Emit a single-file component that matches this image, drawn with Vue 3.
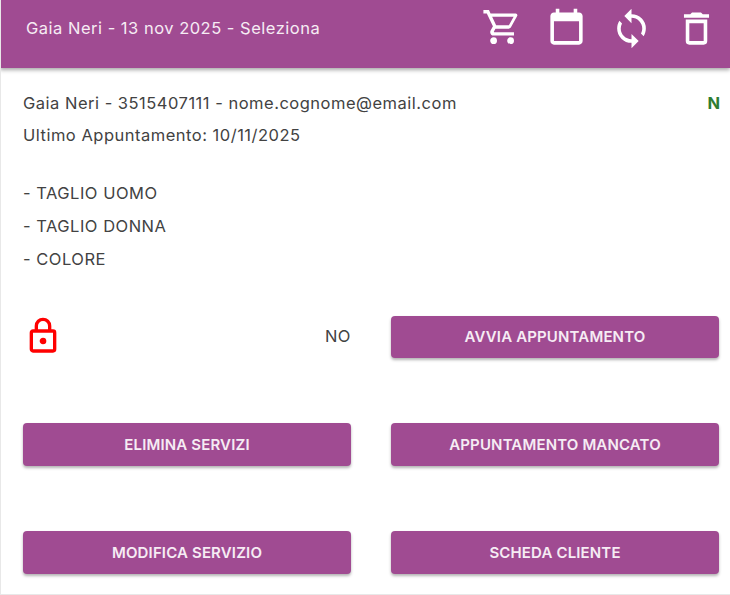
<template>
  <div class="page">
    <header class="toolbar">
      <span class="title">{{ title }}</span>
      <div class="actions">
        <svg v-for="icon in toolbarIcons" :key="icon.name" class="tool-icon" :viewBox="icon.box">
          <path :d="icon.path" />
        </svg>
      </div>
    </header>

    <main class="content">
      <div class="client-line">
        <span>Gaia Neri - 3515407111 - nome.cognome@email.com</span>
        <strong class="status">N</strong>
      </div>
      <div class="line">Ultimo Appuntamento: 10/11/2025</div>

      <ul class="services">
        <li v-for="service in services" :key="service">- {{ service }}</li>
      </ul>

      <div class="grid">
        <div class="lock-row">
          <svg class="lock" viewBox="0 0 24 24">
            <path d="M12,17C10.89,17 10,16.1 10,15C10,13.89 10.89,13 12,13A2,2 0 0,1 14,15A2,2 0 0,1 12,17M18,20V10H6V20H18M18,8A2,2 0 0,1 20,10V20A2,2 0 0,1 18,22H6C4.89,22 4,21.1 4,20V10C4,8.89 4.89,8 6,8H7V6A5,5 0 0,1 12,1A5,5 0 0,1 17,6V8H18M12,3A3,3 0 0,0 9,6V8H15V6A3,3 0 0,0 12,3Z" />
          </svg>
          <span class="lock-label">NO</span>
        </div>
        <button v-for="label in buttons" :key="label" class="btn">{{ label }}</button>
      </div>
    </main>
  </div>
</template>

<script setup>
const title = "Gaia Neri - 13 nov 2025 - Seleziona";
const services = ["TAGLIO UOMO", "TAGLIO DONNA", "COLORE"];
const buttons = ["AVVIA APPUNTAMENTO", "ELIMINA SERVIZI", "APPUNTAMENTO MANCATO", "MODIFICA SERVIZIO", "SCHEDA CLIENTE"];

const toolbarIcons = [
  {
    name: "cart",
    box: "-1 0.2 25.3 25.3",
    path: "M17,18A2,2 0 0,1 19,20A2,2 0 0,1 17,22C15.89,22 15,21.1 15,20C15,18.89 15.89,18 17,18M1,2H4.27L5.21,4H20A1,1 0 0,1 21,5C21,5.17 20.95,5.34 20.88,5.5L17.3,11.97C16.96,12.58 16.3,13 15.55,13H8.1L7.2,14.63L7.17,14.75A0.25,0.25 0 0,0 7.42,15H19V17H7C5.89,17 5,16.1 5,15C5,14.65 5.09,14.32 5.24,14.04L6.6,11.59L3,4H1V2M7,18A2,2 0 0,1 9,20A2,2 0 0,1 7,22C5.89,22 5,21.1 5,20C5,18.89 5.89,18 7,18M16,11L18.78,6H6.14L8.5,11H16Z",
  },
  {
    name: "calendar",
    box: "0 0 24 24",
    path: "M19 3H18V1H16V3H8V1H6V3H5C3.89 3 3 3.9 3 5V19C3 20.1 3.89 21 5 21H19C20.1 21 21 20.1 21 19V5C21 3.9 20.1 3 19 3M19 19H5V8H19V19Z",
  },
  {
    name: "sync",
    box: "0 0 24 24",
    path: "M12,18A6,6 0 0,1 6,12C6,11 6.25,10.03 6.7,9.2L5.24,7.74C4.46,8.97 4,10.43 4,12A8,8 0 0,0 12,20V23L16,19L12,15M12,4V1L8,5L12,9V6A6,6 0 0,1 18,12C18,13 17.75,13.97 17.3,14.8L18.76,16.26C19.54,15.03 20,13.57 20,12A8,8 0 0,0 12,4Z",
  },
  {
    name: "delete",
    box: "0 0 24 24",
    path: "M6,19A2,2 0 0,0 8,21H16A2,2 0 0,0 18,19V7H6V19M8,9H16V19H8V9M15.5,4L14.5,3H9.5L8.5,4H5V6H19V4H15.5Z",
  },
];
</script>

<style>
html,
body {
  margin: 0;
  background: #fff;
}
</style>

<style scoped>
.page {
  width: 730px;
  height: 595px;
  box-sizing: border-box;
  border-left: 1px solid #e8e8e8;
  border-bottom: 1px solid #e8e8e8;
  font-family: Inter, "Open Sans", sans-serif;
  font-size: 16.5px;
  letter-spacing: 0.5px;
  color: #424242;
  overflow: hidden;
}

.toolbar {
  display: flex;
  align-items: center;
  justify-content: space-between;
  height: 68px;
  margin-left: -1px;
  padding: 0 12px 0 26px;
  background: #a04b92;
  color: #f6ecf4;
  box-shadow: 0 2px 4px rgba(0, 0, 0, 0.35);
}

.title {
  margin-bottom: 12px;
}

.actions {
  display: flex;
  gap: 22px;
  margin-bottom: 12px;
}

.tool-icon {
  width: 43px;
  height: 43px;
  fill: #fff;
}

.content {
  padding: 19px 10px 0 22px;
}

.client-line {
  display: flex;
  justify-content: space-between;
  line-height: 32px;
}

.status {
  color: #2e7d32;
  letter-spacing: 0;
}

.line {
  line-height: 32px;
}

.services {
  list-style: none;
  margin: 26px 0 0;
  padding: 0;
}

.services li {
  line-height: 33px;
}

.grid {
  display: grid;
  grid-template-columns: 328px 328px;
  column-gap: 40px;
  row-gap: 65.2px;
  margin-top: 39.7px;
}

.lock-row {
  display: flex;
  align-items: center;
  justify-content: space-between;
  height: 42.5px;
}

.lock {
  align-self: flex-start;
  width: 40px;
  height: 40px;
  fill: #ff0000;
}

.lock-label {
  margin-bottom: 2px;
}

.btn {
  height: 42.5px;
  padding: 0;
  border: none;
  border-radius: 4px;
  background: #a04b92;
  color: #f6ecf4;
  font-family: inherit;
  font-size: 15px;
  font-weight: 600;
  letter-spacing: 0.15px;
  box-shadow: 0 2px 3px rgba(0, 0, 0, 0.3);
}
</style>
